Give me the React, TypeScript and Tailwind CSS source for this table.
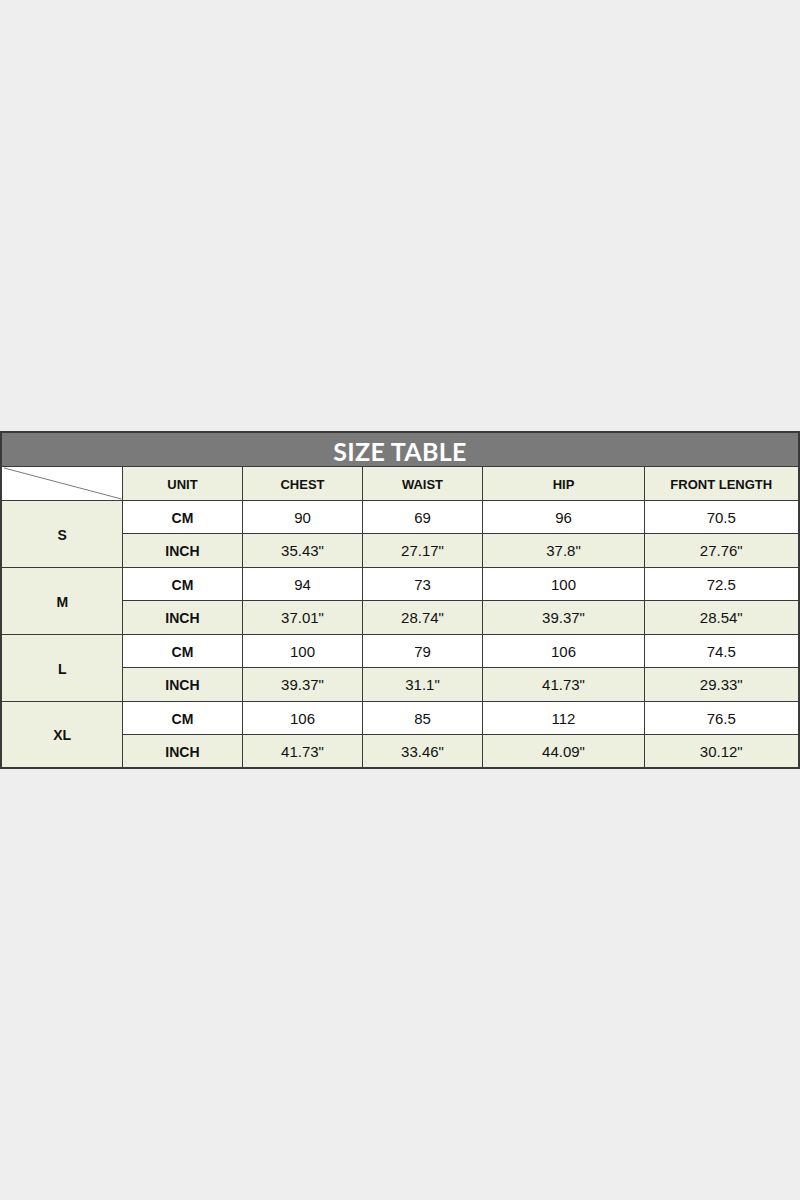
const columns = ["UNIT", "CHEST", "WAIST", "HIP", "FRONT LENGTH"];

const sizes = [
  { name: "S", cm: ["90", "69", "96", "70.5"], inch: ['35.43"', '27.17"', '37.8"', '27.76"'] },
  { name: "M", cm: ["94", "73", "100", "72.5"], inch: ['37.01"', '28.74"', '39.37"', '28.54"'] },
  { name: "L", cm: ["100", "79", "106", "74.5"], inch: ['39.37"', '31.1"', '41.73"', '29.33"'] },
  { name: "XL", cm: ["106", "85", "112", "76.5"], inch: ['41.73"', '33.46"', '44.09"', '30.12"'] },
];

const cell = "border border-[#3a3a3a] text-center align-middle p-0 pt-[3px]";
const label = "font-bold text-[14px]";
const head = "font-bold text-[13px]";
const num = "font-normal text-[15px]";
const green = "bg-[#edf0df]";

export default function App() {
  return (
    <div className="h-[1200px] w-[800px] bg-[#eeeeee] flex items-center justify-center font-['Liberation_Sans',Arial,sans-serif] text-[#111111]">
      <table className="table-fixed border-collapse w-[797px] border-2 border-[#3a3a3a]">
        <colgroup>
          <col className="w-[121px]" />
          <col className="w-[120px]" />
          <col className="w-[120px]" />
          <col className="w-[120px]" />
          <col className="w-[162px]" />
          <col className="w-[154px]" />
        </colgroup>
        <tbody>
          <tr className="h-[34px]">
            <td
              colSpan={6}
              className="bg-[#7a7a7a] text-white text-center align-middle p-0 pt-1 border border-[#3a3a3a] font-['Lato',sans-serif] font-bold text-[25px] leading-none tracking-[0.3px]"
            >
              SIZE TABLE
            </td>
          </tr>
          <tr className="h-[34px]">
            <td className={`${cell} bg-white relative`}>
              <svg className="absolute inset-0 w-full h-full" viewBox="0 0 120 34" preserveAspectRatio="none">
                <line x1="2" y1="1" x2="120" y2="33" stroke="#555" strokeWidth="0.8" />
              </svg>
            </td>
            {columns.map((c) => (
              <td key={c} className={`${cell} ${green} ${head}`}>
                {c}
              </td>
            ))}
          </tr>
          {sizes.map((s) => (
            <>
              <tr key={s.name + "cm"} className="h-[33px]">
                <td rowSpan={2} className={`${cell} ${green} ${label}`}>
                  {s.name}
                </td>
                <td className={`${cell} bg-white ${label}`}>CM</td>
                {s.cm.map((v, i) => (
                  <td key={i} className={`${cell} bg-white ${num}`}>
                    {v}
                  </td>
                ))}
              </tr>
              <tr key={s.name + "in"} className="h-[34px]">
                <td className={`${cell} ${green} ${label}`}>INCH</td>
                {s.inch.map((v, i) => (
                  <td key={i} className={`${cell} ${green} ${num}`}>
                    {v}
                  </td>
                ))}
              </tr>
            </>
          ))}
        </tbody>
      </table>
    </div>
  );
}
